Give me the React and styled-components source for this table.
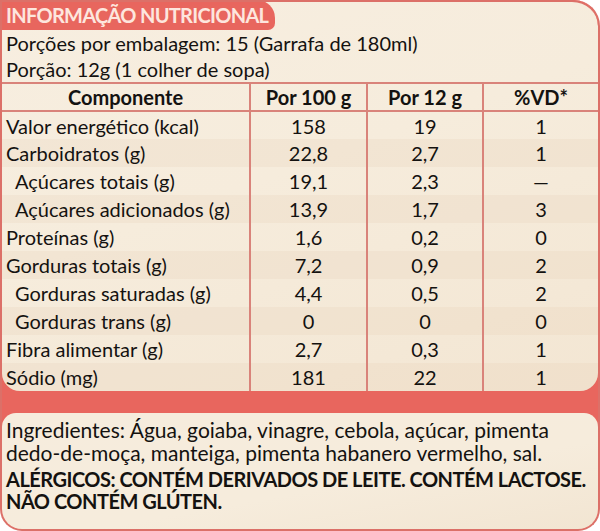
import styled, { createGlobalStyle } from 'styled-components'

const RED = '#e8665e'
const LINE = '#d9837a'
const CREAM = '#f6ecdc'

const rows = [
	{ name: 'Valor energético (kcal)', a: '158', b: '19', vd: '1' },
	{ name: 'Carboidratos (g)', a: '22,8', b: '2,7', vd: '1' },
	{ name: 'Açúcares totais (g)', a: '19,1', b: '2,3', vd: '—', sub: true },
	{ name: 'Açúcares adicionados (g)', a: '13,9', b: '1,7', vd: '3', sub: true },
	{ name: 'Proteínas (g)', a: '1,6', b: '0,2', vd: '0' },
	{ name: 'Gorduras totais (g)', a: '7,2', b: '0,9', vd: '2' },
	{ name: 'Gorduras saturadas (g)', a: '4,4', b: '0,5', vd: '2', sub: true },
	{ name: 'Gorduras trans (g)', a: '0', b: '0', vd: '0', sub: true },
	{ name: 'Fibra alimentar (g)', a: '2,7', b: '0,3', vd: '1' },
	{ name: 'Sódio (mg)', a: '181', b: '22', vd: '1' },
]

export default function App () {
	return (
		<>
			<GlobalStyle />
			<Card>
				<Top>
					<Title>INFORMAÇÃO NUTRICIONAL</Title>
					<Info>Porções por embalagem: 15 (Garrafa de 180ml)</Info>
					<Info>Porção: 12g (1 colher de sopa)</Info>
					<Table>
						<colgroup>
							<col style={{ width: 248 }} />
							<col style={{ width: 117 }} />
							<col style={{ width: 116 }} />
							<col />
						</colgroup>
						<thead>
							<tr>
								<Th>Componente</Th>
								<Th>Por 100 g</Th>
								<Th>Por 12 g</Th>
								<Th>%VD*</Th>
							</tr>
						</thead>
						<tbody>
							{rows.map((r, i) =>
								<Row key={r.name} $odd={i % 2 === 1}>
									<Name $sub={r.sub}>{r.name}</Name>
									<Value>{r.a}</Value>
									<Value>{r.b}</Value>
									<Value>{r.vd}</Value>
								</Row>
							)}
						</tbody>
					</Table>
				</Top>
				<Bottom>
					<Ingredients>
						Ingredientes: Água, goiaba, vinagre, cebola, açúcar, pimenta<br />
						dedo-de-moça, manteiga, pimenta habanero vermelho, sal.
					</Ingredients>
					<Allergens>
						ALÉRGICOS: CONTÉM DERIVADOS DE LEITE. CONTÉM LACTOSE.<br />
						NÃO CONTÉM GLÚTEN.
					</Allergens>
				</Bottom>
			</Card>
		</>
	)
}

const GlobalStyle = createGlobalStyle`
	body {
		margin: 0;
		background: #fff;
		font-family: Lato, 'Open Sans', sans-serif;
		color: #141210;
	}
`

const Card = styled.div`
	width: 600px;
	height: 531px;
	box-sizing: border-box;
	border: 2px solid #dc7068;
	border-top: none;
	border-radius: 0 26px 22px 22px;
	background: ${RED};
	overflow: hidden;
	display: flex;
	flex-direction: column;
`

const Top = styled.section`
	flex-shrink: 0;
	background: linear-gradient(160deg, #f7eee0 0%, ${CREAM} 45%, #f3e6d3 100%);
	border-radius: 0 26px 18px 18px;
	border-top: 2px solid #dc7068;
	overflow: hidden;
`

const Title = styled.h1`
	width: fit-content;
	margin: -2px 0 0;
	height: 30px;
	padding: 0 7px 0 4px;
	background: ${RED};
	color: #fde6de;
	font-size: 20px;
	font-weight: 700;
	line-height: 31px;
	letter-spacing: -0.7px;
	border-radius: 0 18px 7px 0;
`

const Info = styled.p`
	margin: 0;
	padding-left: 4px;
	font-size: 20px;
	line-height: 26px;
`

const Table = styled.table`
	width: 100%;
	border-collapse: collapse;
	table-layout: fixed;
	font-size: 20px;
	border-top: 2px solid ${LINE};
	td + td, th + th { border-left: 2px solid ${LINE}; }
`

const Th = styled.th`
	height: 26px;
	padding: 0;
	font-weight: 700;
	text-align: center;
	border-bottom: 2px solid ${LINE};
`

const Row = styled.tr`
	height: 28px;
	background: ${props => props.$odd ? 'rgba(225, 200, 170, 0.18)' : 'transparent'};
`

const Name = styled.td`
	padding: 0 0 0 ${props => props.$sub ? '13px' : '4px'};
	white-space: nowrap;
`

const Value = styled.td`
	padding: 0;
	text-align: center;
`

const Bottom = styled.section`
	flex: 1;
	margin-top: 22px;
	background: linear-gradient(170deg, #f6ecdd 0%, ${CREAM} 60%, #f2e5d2 100%);
	border-radius: 14px 14px 0 0;
	padding: 5px 4px 0;
`

const Ingredients = styled.p`
	margin: 0;
	font-size: 21px;
	line-height: 23px;
`

const Allergens = styled.p`
	margin: 4px 0 0;
	font-size: 20px;
	font-weight: 700;
	line-height: 22px;
	letter-spacing: -0.5px;
	white-space: nowrap;
`
